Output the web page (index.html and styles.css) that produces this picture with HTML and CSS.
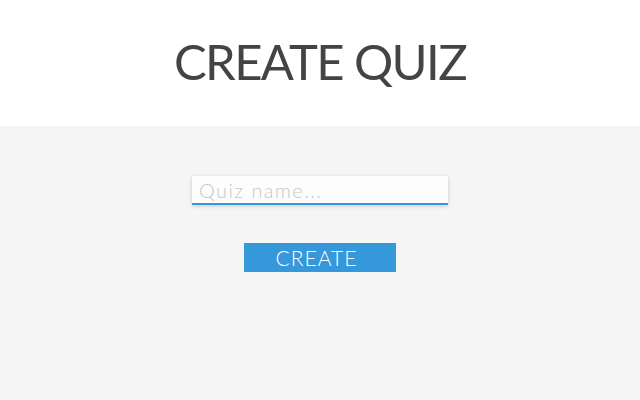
FILE: index.html
```html
<!DOCTYPE html>
<html>
<head>
<meta charset="utf-8">
<link rel="stylesheet" href="styles.css">
</head>
<body>
<header class="header">
  <h1 class="title">CREATE QUIZ</h1>
</header>
<main class="main">
  <input class="name-input" type="text" placeholder="Quiz name...">
  <button class="create-btn">CREATE</button>
</main>
</body>
</html>
```
FILE: styles.css
```css
html, body {
  margin: 0;
  padding: 0;
  height: 100%;
}
body {
  font-family: "Lato", "Open Sans", sans-serif;
  background: #f5f5f5;
  display: flex;
  flex-direction: column;
}
.header {
  background: #ffffff;
  height: 126px;
  display: flex;
  justify-content: center;
  align-items: center;
}
.title {
  margin: 0;
  font-weight: 400;
  font-size: 49px;
  letter-spacing: -1.6px;
  color: #444444;
  line-height: 1;
  padding-bottom: 4px;
}
.main {
  flex: 1;
  display: flex;
  flex-direction: column;
  align-items: center;
  padding-top: 50px;
}
.name-input {
  box-sizing: border-box;
  width: 256px;
  height: 29px;
  margin: 0;
  border: none;
  border-bottom: 2px solid #3498db;
  background: #fdfdfd;
  box-shadow: 0 1px 4px rgba(0,0,0,0.18);
  font-family: inherit;
  font-weight: 300;
  font-size: 20px;
  letter-spacing: 1.4px;
  padding: 0 7px;
  color: #444;
  outline: none;
}
.name-input::placeholder {
  color: #c8c8c8;
  letter-spacing: 1.4px;
}
.create-btn {
  margin-top: 38px;
  width: 152px;
  height: 29px;
  border: none;
  background: #3498db;
  color: #ffffff;
  font-family: inherit;
  font-weight: 300;
  font-size: 21px;
  letter-spacing: 1px;
  padding: 0 7px 0 0;
  line-height: 29px;
}
```
